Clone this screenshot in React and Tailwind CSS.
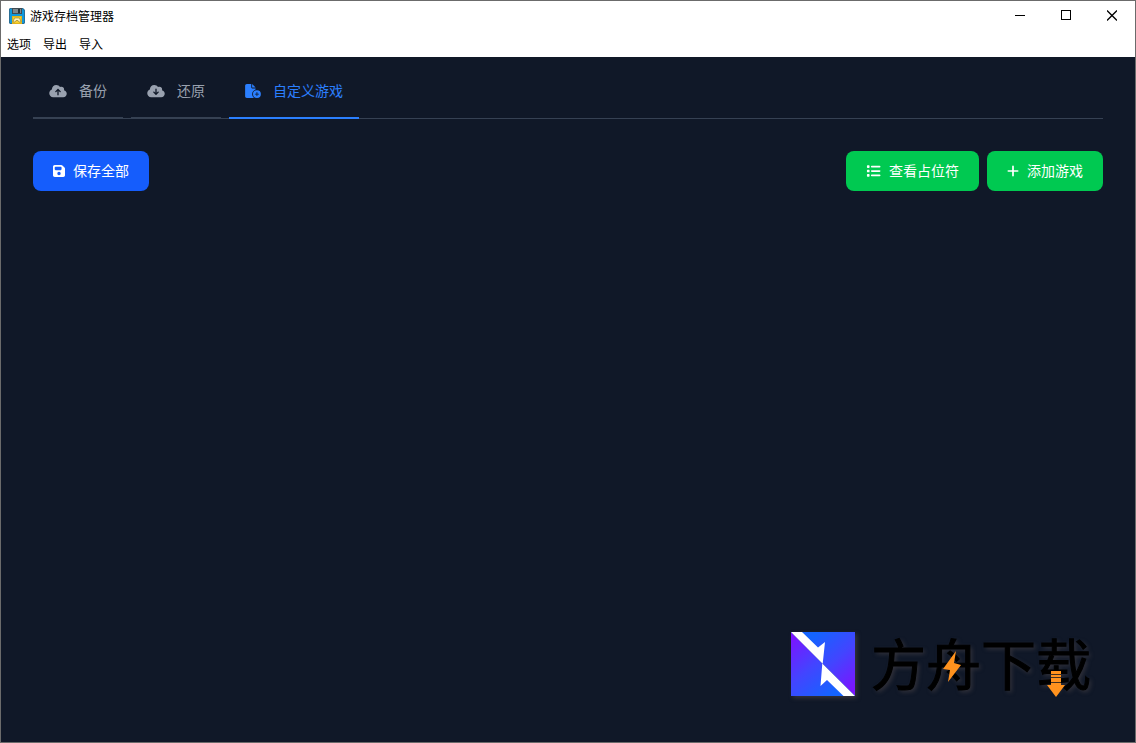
import React from "react";
import {
  FaCloudArrowUp,
  FaCloudArrowDown,
  FaFileCirclePlus,
  FaFloppyDisk,
  FaList,
  FaPlus,
} from "react-icons/fa6";

const tabs = [
  { label: "备份", icon: FaCloudArrowUp, size: "w-[18px]", active: false },
  { label: "还原", icon: FaCloudArrowDown, size: "w-[18px]", active: false },
  { label: "自定义游戏", icon: FaFileCirclePlus, size: "w-4", active: true },
];

function AppIcon() {
  return (
    <svg viewBox="0 0 16 16" className="size-4" aria-hidden="true">
      <path d="M1 0h13l2 2v13l-1 1H1l-1-1V1z" fill="#2b6f96" />
      <path d="M1 1h12.500l1.500 1.500V15H1z" fill="#0e98dc" />
      <path d="M3 0h10v6H3z" fill="#3f4b52" />
      <path d="M4 1h8v4H4z" fill="#7d898f" />
      <path d="M9 1h2v4H9z" fill="#26343c" />
      <path d="M3 8h10v8H3z" fill="#e0b31c" />
      <path d="M4 9h8v6H4z" fill="#f6cf2e" />
      <path d="M5.500 10h5l1.500 4h-2l-1-1.500H7L6 14H4z" fill="#fff4bd" stroke="#8a7628" strokeWidth=".6" />
    </svg>
  );
}

function TitleBar() {
  const control = "flex h-full w-[46px] items-center justify-center";
  return (
    <header className="flex h-[29px] items-center justify-between pl-2">
      <div className="flex items-center gap-[5px]">
        <AppIcon />
        <h1 className="leading-[14px]">游戏存档管理器</h1>
      </div>
      <div className="flex h-full">
        <button type="button" aria-label="最小化" className={control}>
          <svg viewBox="0 0 10 11" className="h-[11px] w-[10px]" shapeRendering="crispEdges">
            <path d="M0 5h10v1H0z" />
          </svg>
        </button>
        <button type="button" aria-label="最大化" className={control}>
          <svg viewBox="0 0 10 11" className="h-[11px] w-[10px]" shapeRendering="crispEdges">
            <path d="M.5 .5h9v9h-9z" fill="none" stroke="#000" />
          </svg>
        </button>
        <button type="button" aria-label="关闭" className={control}>
          <svg viewBox="0 0 10 11" className="h-[11px] w-[10px]">
            <path d="M0 .5l10 10M10 .5l-10 10" fill="none" stroke="#000" strokeWidth="1.3" />
          </svg>
        </button>
      </div>
    </header>
  );
}

function Brand() {
  return (
    <div className="absolute right-11 bottom-[46px] flex h-16 items-start gap-4">
      <svg viewBox="0 0 64 64" className="size-16 drop-shadow-[2px_2px_2px_rgba(90,80,80,0.5)]" aria-hidden="true">
        <defs>
          <linearGradient id="upper" gradientUnits="userSpaceOnUse" x1="16" y1="10" x2="60" y2="58">
            <stop offset="0" stopColor="#1464ff" />
            <stop offset=".5" stopColor="#4245ff" />
            <stop offset="1" stopColor="#7a16ff" />
          </linearGradient>
          <linearGradient id="lower" gradientUnits="userSpaceOnUse" x1="0" y1="8" x2="44" y2="60">
            <stop offset="0" stopColor="#7a16ff" />
            <stop offset=".5" stopColor="#4245ff" />
            <stop offset="1" stopColor="#1464ff" />
          </linearGradient>
        </defs>
        <path d="M0 0h64v64z" fill="url(#upper)" />
        <path d="M0 0v64h64z" fill="url(#lower)" />
        <path d="M0 0h11l16 15.500L34 10l-2.300 21.700zM31.300 31.500L64 64H52.500L36 48l-6.500 6z" fill="#fff" />
      </svg>
      <div className="relative">
        <p className="text-[55px] leading-[58px] text-black [-webkit-text-stroke:1px_black] [text-shadow:2px_2px_4px_rgba(90,80,80,0.5)]">
          方舟下载
        </p>
        <svg viewBox="0 0 18 32" className="absolute top-[19px] left-[72px] h-8 w-[18px]" aria-hidden="true">
          <path d="M13 0L0 18l7 1-2 12 13-17-7-2z" fill="#ff921e" />
        </svg>
        <svg viewBox="0 0 18 26" className="absolute top-[39px] left-[176px] h-[26px] w-[18px]" aria-hidden="true">
          <path d="M4 0h10v14h4L9 26 0 14h4z" fill="#ff921e" />
          <path d="M4 3.500h10M4 6.500h10M4 11.500h10" stroke="#2b2420" strokeWidth=".9" />
        </svg>
      </div>
    </div>
  );
}

export default function App() {
  const action =
    "flex items-center rounded-lg px-5 pt-[9px] pb-[11px] text-sm text-white";
  return (
    <div className="relative flex min-h-screen flex-col border border-[#6b6b6b] bg-white font-['Noto_Sans_CJK_SC',sans-serif] text-xs text-black">
      <TitleBar />
      <nav aria-label="菜单" className="flex h-[27px] items-center gap-3 px-[6px]">
        <button type="button">选项</button>
        <button type="button">导出</button>
        <button type="button">导入</button>
      </nav>

      <main className="grow bg-gray-900 px-8 pt-2">
        <div role="tablist" className="flex gap-2 border-b border-gray-700 text-sm">
          {tabs.map(({ label, icon: Icon, size, active }) => (
            <button
              key={label}
              type="button"
              role="tab"
              aria-selected={active}
              className={`-mb-px flex items-center gap-3 border-b-2 px-4 pt-[15px] pb-[17px] ${
                active ? "border-blue-500 text-blue-500" : "border-gray-700 text-gray-400"
              }`}
            >
              <Icon className={`mt-px h-[14px] ${size}`} />
              {label}
            </button>
          ))}
        </div>

        <div className="mt-8 flex items-center justify-between">
          <button type="button" className={`${action} gap-2 bg-blue-600`}>
            <FaFloppyDisk className="mt-px h-[14px] w-3" />
            保存全部
          </button>
          <div className="flex gap-2">
            <button type="button" className={`${action} gap-2 bg-green-500`}>
              <FaList className="mt-px h-[14px] w-[15px]" />
              查看占位符
            </button>
            <button type="button" className={`${action} gap-2 bg-green-500`}>
              <FaPlus className="mt-px h-[14px] w-3" />
              添加游戏
            </button>
          </div>
        </div>
      </main>
      <Brand />
    </div>
  );
}
